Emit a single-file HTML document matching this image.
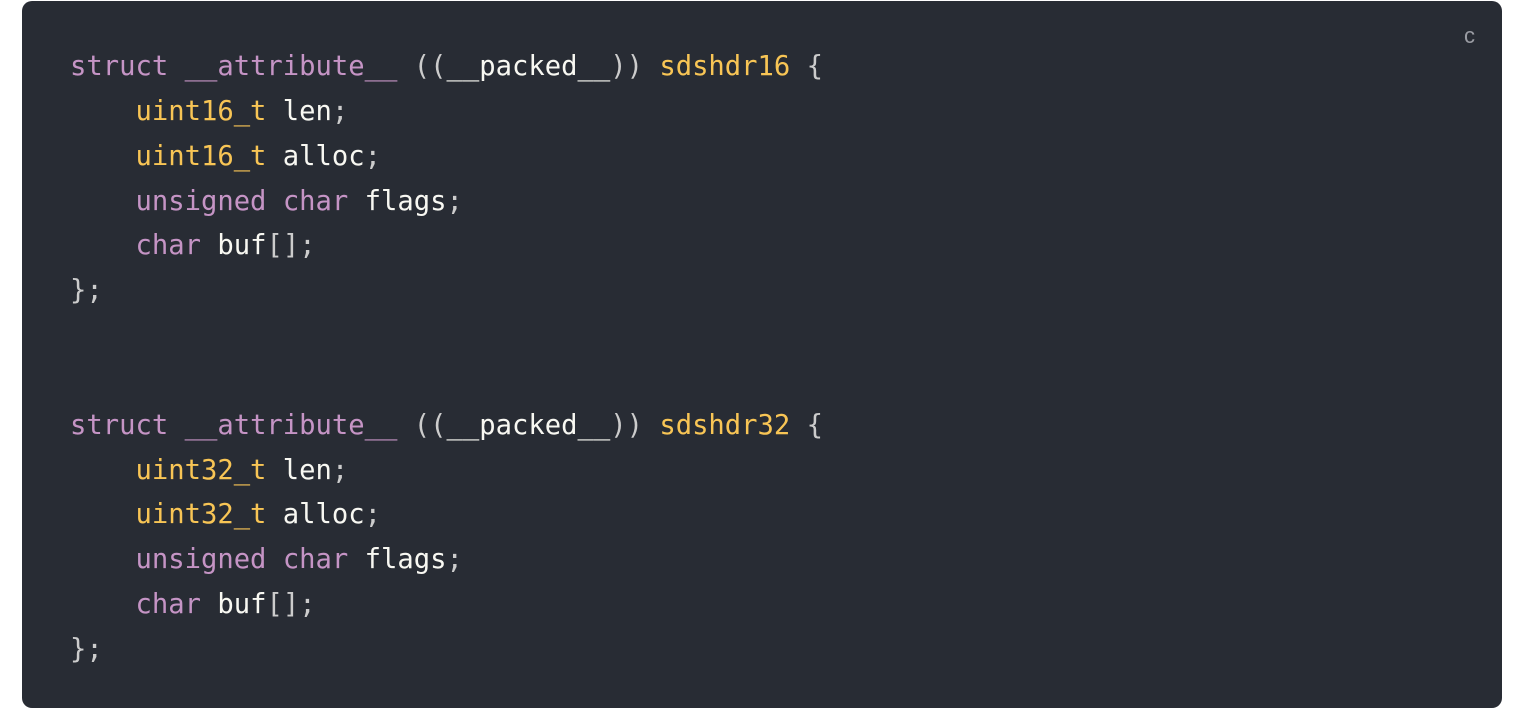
<!DOCTYPE html>
<html><head><meta charset="utf-8"><style>
html,body{margin:0;padding:0;background:#fff;width:1516px;height:714px;overflow:hidden}
.box{position:absolute;left:22px;top:1px;width:1480px;height:707px;background:#282c34;border-radius:10px}
pre{margin:0;position:absolute;left:48px;top:44px;font-family:"DejaVu Sans Mono","Liberation Mono",monospace;font-size:27.2px;line-height:44.85px;color:#f8f8f2;white-space:pre}
.k{color:#c594c5}.y{color:#f8c555}.p{color:#cccccc}
.lang{position:absolute;left:1442px;top:22px;font-family:"Liberation Sans",sans-serif;font-size:22px;line-height:26px;color:#9a9ca3}
</style></head><body>
<div class="box"><div class="lang">c</div>
<pre><span class="k">struct</span> <span class="k">__attribute__</span> <span class="p">((</span>__packed__<span class="p">))</span> <span class="y">sdshdr16</span> <span class="p">{</span>
    <span class="y">uint16_t</span> len<span class="p">;</span>
    <span class="y">uint16_t</span> alloc<span class="p">;</span>
    <span class="k">unsigned</span> <span class="k">char</span> flags<span class="p">;</span>
    <span class="k">char</span> buf<span class="p">[]</span><span class="p">;</span>
<span class="p">};</span>


<span class="k">struct</span> <span class="k">__attribute__</span> <span class="p">((</span>__packed__<span class="p">))</span> <span class="y">sdshdr32</span> <span class="p">{</span>
    <span class="y">uint32_t</span> len<span class="p">;</span>
    <span class="y">uint32_t</span> alloc<span class="p">;</span>
    <span class="k">unsigned</span> <span class="k">char</span> flags<span class="p">;</span>
    <span class="k">char</span> buf<span class="p">[]</span><span class="p">;</span>
<span class="p">};</span></pre></div>
</body></html>
